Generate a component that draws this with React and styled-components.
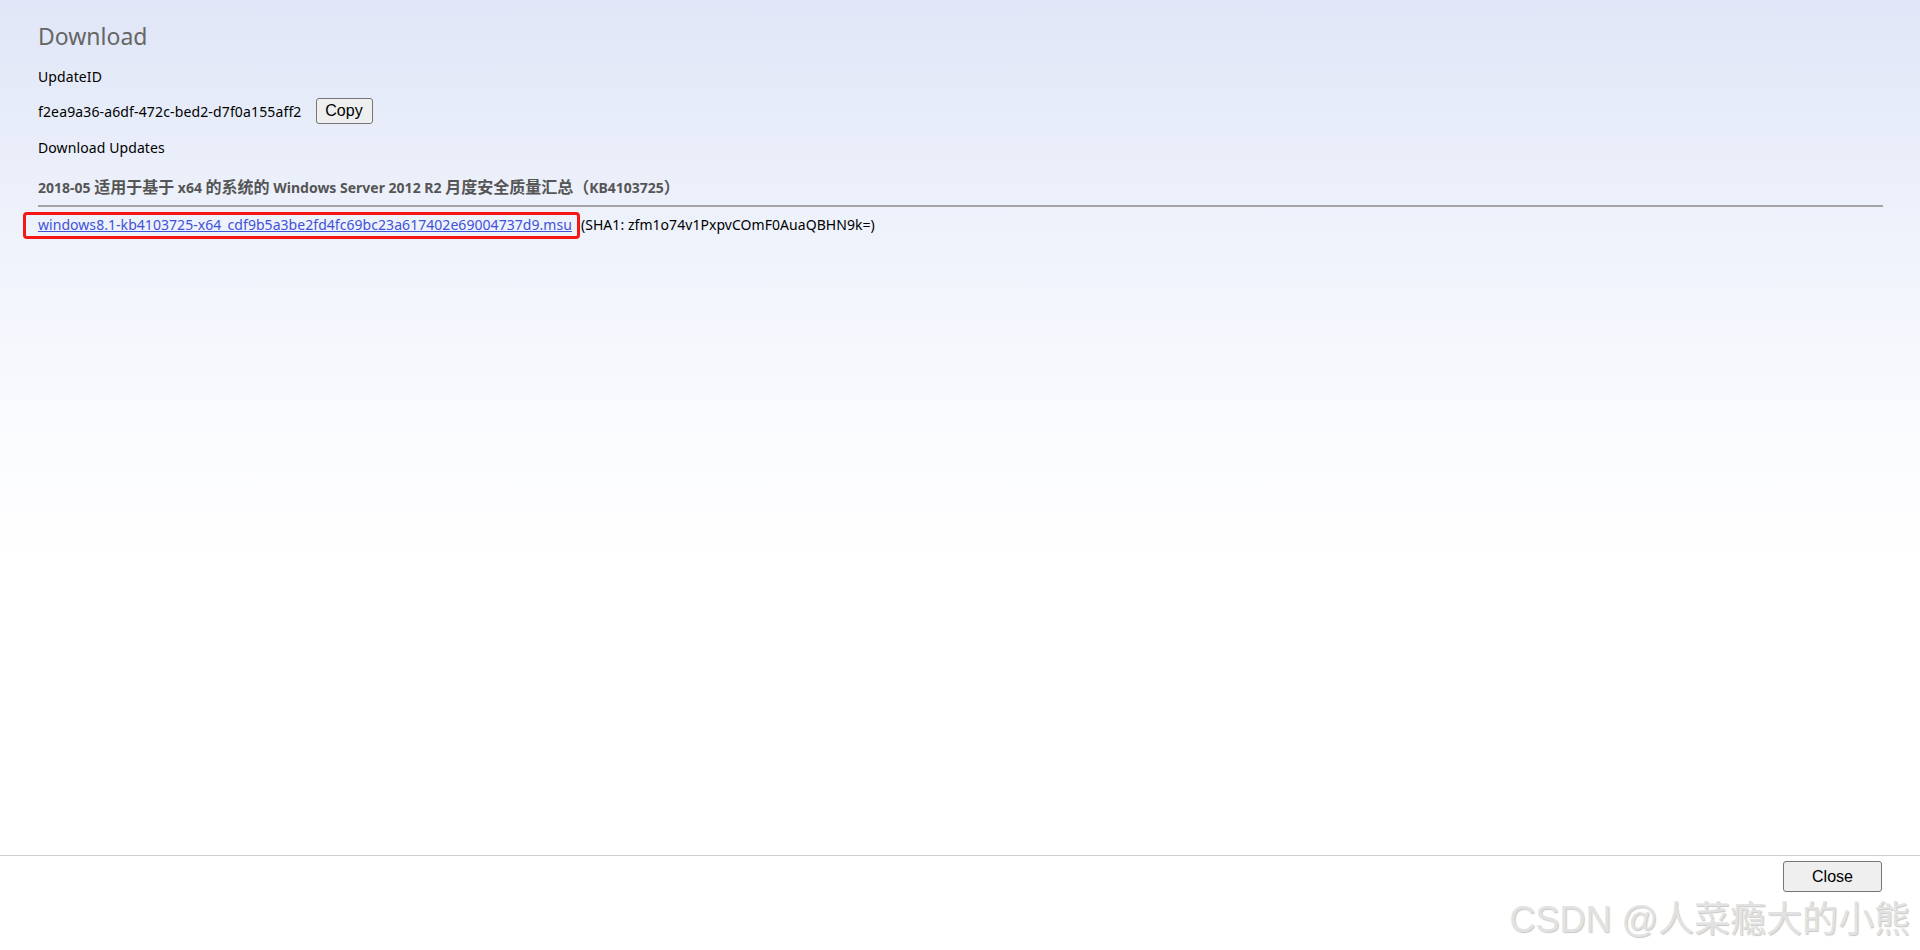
import styled, { createGlobalStyle } from "styled-components";

const GlobalStyle = createGlobalStyle`
  html, body {
    margin: 0;
    padding: 0;
    height: 100%;
  }
  body {
    font-family: "Noto Sans", "Open Sans", "Noto Sans CJK SC", sans-serif;
    color: #000;
  }
  * {
    box-sizing: border-box;
  }
`;

const Page = styled.div`
  position: relative;
  display: flex;
  flex-direction: column;
  height: 100vh;
  overflow: hidden;
  background: #fff;
`;

const Main = styled.div`
  flex: 1;
  padding: 20px 37px 0 38px;
  background: linear-gradient(to bottom, #e0e6f7 0%, #eef2fb 230px, #fafbfe 430px, #ffffff 560px);
`;

const Title = styled.h2`
  margin: 0;
  font-size: 23px;
  line-height: 32px;
  font-weight: 400;
  color: #666;
`;

const Label = styled.div`
  margin-top: ${(p) => p.$top || 0}px;
  font-size: 14px;
  line-height: 20px;
  letter-spacing: 0.1px;
`;

const IdRow = styled.div`
  display: flex;
  align-items: center;
  gap: 14px;
  margin-top: 11px;
  font-size: 14px;
  line-height: 20px;
  letter-spacing: 0.14px;
  span {
    position: relative;
    top: 1px;
  }
`;

const Button = styled.button`
  height: ${(p) => p.$h}px;
  width: ${(p) => p.$w}px;
  padding: 0;
  font-family: "Liberation Sans", Arial, sans-serif;
  font-size: 16px;
  color: #000;
  background: #efefef;
  border: 1px solid #767676;
  border-radius: 3px;
`;

const SectionTitle = styled.div`
  margin-top: 20px;
  font-size: 14px;
  line-height: 20px;
  font-weight: 700;
  color: #555;
  font-family: "Noto Sans", "Noto Sans CJK SC", sans-serif;
`;

const Cjk = styled.span`
  font-size: 16px;
  line-height: 1;
`;

const Divider = styled.div`
  margin-top: 7px;
  height: 2px;
  background: #a4a4a4;
`;

const FileRow = styled.div`
  display: flex;
  align-items: baseline;
  margin-top: 8px;
  font-size: 14px;
  line-height: 20px;
  letter-spacing: 0.05px;
`;

const FileLink = styled.a`
  position: relative;
  color: #3f51d9;
  text-decoration: underline;
  margin-right: 9px;
  &::after {
    content: "";
    position: absolute;
    left: -15px;
    right: -8px;
    top: -3px;
    bottom: -4px;
    border: 3px solid #f51717;
    border-radius: 4px;
    pointer-events: none;
  }
`;

const Footer = styled.div`
  height: 95px;
  border-top: 1px solid #cfcfcf;
  display: flex;
  justify-content: flex-end;
  align-items: flex-start;
  padding: 5px 38px 0;
  background: #fff;
`;

const Watermark = styled.div`
  position: absolute;
  right: 10px;
  bottom: 9px;
  font-family: "Liberation Sans", "Noto Sans CJK SC", sans-serif;
  font-size: 36px;
  line-height: 42px;
  color: #e2e2e2;
  text-shadow: 1px 1px 1px #c8c8c8;
  white-space: nowrap;
  pointer-events: none;
`;

export default function App() {
  return (
    <>
      <GlobalStyle />
      <Page>
        <Main>
          <Title>Download</Title>
          <Label $top={15}>UpdateID</Label>
          <IdRow>
            <span>f2ea9a36-a6df-472c-bed2-d7f0a155aff2</span>
            <Button $w={57} $h={26}>Copy</Button>
          </IdRow>
          <Label $top={14}>Download Updates</Label>
          <SectionTitle>
            2018-05 <Cjk>适用于基于</Cjk> x64 <Cjk>的系统的</Cjk> Windows Server 2012 R2{" "}
            <Cjk>月度安全质量汇总（</Cjk>KB4103725<Cjk>）</Cjk>
          </SectionTitle>
          <Divider />
          <FileRow>
            <FileLink href="#">
              windows8.1-kb4103725-x64_cdf9b5a3be2fd4fc69bc23a617402e69004737d9.msu
            </FileLink>
            <span>(SHA1: zfm1o74v1PxpvCOmF0AuaQBHN9k=)</span>
          </FileRow>
        </Main>
        <Footer>
          <Button $w={99} $h={31}>Close</Button>
        </Footer>
        <Watermark>CSDN @人菜瘾大的小熊</Watermark>
      </Page>
    </>
  );
}
